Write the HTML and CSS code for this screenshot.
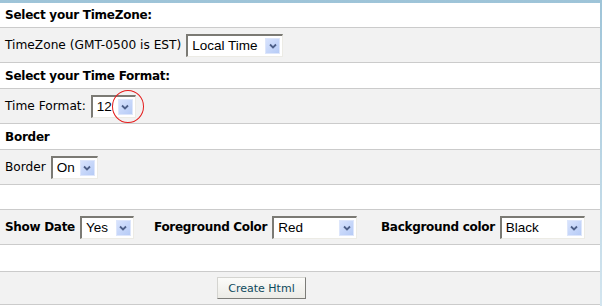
FILE: index.html
```html
<!DOCTYPE html>
<html lang="en">
<head>
    <meta charset="UTF-8">
    <title>Clock Settings</title>
    <link rel="stylesheet" href="styles.css">
</head>
<body>
    <div class="panel">
        <!-- Zeitzone -->
        <div class="row head first">Select your TimeZone:</div>
        <div class="row field">
            <span class="label">TimeZone (GMT-0500 is EST)</span>
            <span class="combo w-tz"><span class="value">Local Time</span><span class="btn"><svg width="8" height="6" viewBox="0 0 8 6"><polyline points="1,1.5 4,4.5 7,1.5"/></svg></span></span>
        </div>

        <!-- Zeitformat -->
        <div class="row head">Select your Time Format:</div>
        <div class="row field">
            <span class="label">Time Format:</span>
            <span class="combo w-fmt"><span class="value">12</span><span class="btn"><svg width="8" height="6" viewBox="0 0 8 6"><polyline points="1,1.5 4,4.5 7,1.5"/></svg></span><span class="ring"></span></span>
        </div>

        <!-- Rahmen -->
        <div class="row head">Border</div>
        <div class="row field">
            <span class="label">Border</span>
            <span class="combo w-border"><span class="value">On</span><span class="btn"><svg width="8" height="6" viewBox="0 0 8 6"><polyline points="1,1.5 4,4.5 7,1.5"/></svg></span></span>
        </div>

        <div class="row blank"></div>

        <!-- Datum und Farben -->
        <div class="row field options">
            <span class="group">
                <b>Show Date</b>
                <span class="combo w-yes"><span class="value">Yes</span><span class="btn"><svg width="8" height="6" viewBox="0 0 8 6"><polyline points="1,1.5 4,4.5 7,1.5"/></svg></span></span>
            </span>
            <span class="group">
                <b>Foreground Color</b>
                <span class="combo w-color"><span class="value">Red</span><span class="btn"><svg width="8" height="6" viewBox="0 0 8 6"><polyline points="1,1.5 4,4.5 7,1.5"/></svg></span></span>
            </span>
            <span class="group">
                <b>Background color</b>
                <span class="combo w-color"><span class="value">Black</span><span class="btn"><svg width="8" height="6" viewBox="0 0 8 6"><polyline points="1,1.5 4,4.5 7,1.5"/></svg></span></span>
            </span>
        </div>

        <div class="row blank last"></div>

        <div class="row field submit">
            <button class="create">Create Html</button>
        </div>
    </div>
</body>
</html>
```

FILE: styles.css
```css
body {
    margin: 0;
    height: 306px;
    overflow: hidden;
    background: linear-gradient(#9ec4d8, #d3e5ef);
    font-family: "DejaVu Sans", Verdana, sans-serif;
    font-size: 12px;
    color: #000;
}
.panel {
    width: 600px;
    height: 303px;
    margin-top: 3px;
    background-color: white;
}
.row {
    display: flex;
    align-items: center;
    box-sizing: border-box;
    padding-left: 5px;
    border-bottom: 1px solid #cbcbcb;
}
.head {
    height: 26px;
    font-weight: bold;
    letter-spacing: -0.25px;
}
.head.first {
    height: 25px;
}
.field {
    height: 35px;
    background-color: #f2f2f2;
}
.blank {
    height: 25px;
}
.blank.last {
    height: 27px;
}
.label {
    margin-right: 5px;
    font-size: 12.2px;
}
.combo {
    position: relative;
    display: inline-flex;
    align-items: center;
    justify-content: space-between;
    box-sizing: border-box;
    height: 23px;
    padding: 0 2px 0 4px;
    border-style: solid;
    border-width: 2px 1px 1px 2px;
    border-color: #7b7a74 #ecebe5 #ecebe5 #7b7a74;
    background-color: white;
    font-family: "Liberation Sans", Arial, sans-serif;
    font-size: 13.5px;
}
.btn {
    display: flex;
    align-items: center;
    justify-content: center;
    box-sizing: border-box;
    width: 15px;
    height: 16px;
    border: 1px solid #dde6fb;
    background: linear-gradient(135deg, #d8e3fd, #b6cbf6);
}
.btn svg polyline {
    fill: none;
    stroke: #4d5f88;
    stroke-width: 1.8;
}
.w-tz { width: 97px; }
.w-fmt { width: 45px; }
.w-border { width: 47px; }
.w-yes { width: 54px; }
.w-color { width: 85px; }
.ring {
    position: absolute;
    left: 19px;
    top: -7px;
    width: 30px;
    height: 31px;
    border: 1.5px solid #e41b1b;
    border-radius: 50%;
    pointer-events: none;
}
.options {
    display: grid;
    grid-template-columns: 149px 227px auto;
}
.group {
    display: flex;
    align-items: center;
    gap: 5px;
}
.group b {
    letter-spacing: -0.3px;
}
.submit {
    height: 33px;
    padding-left: 217px;
}
.create {
    width: 89px;
    height: 22px;
    padding: 0;
    border: 1px solid;
    border-color: #d4d4d0 #7c7c78 #7c7c78 #d4d4d0;
    background: linear-gradient(#fbfbf9, #ecebe6);
    color: #0f4a5c;
    font-family: "DejaVu Sans", Verdana, sans-serif;
    font-size: 11px;
}
```
